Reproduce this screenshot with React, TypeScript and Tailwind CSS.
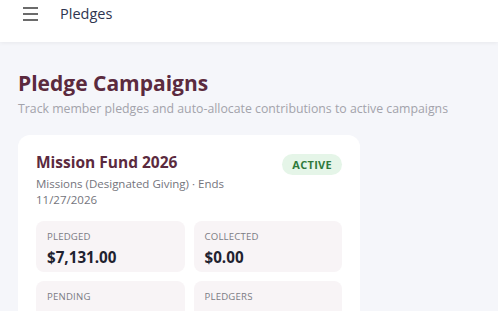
import React from "react";

function Stat({ label, value }: { label: string; value: string }) {
  return (
    <div className="rounded-[8px] bg-[#f8f4f6] px-[11px] pt-[10px] pb-[9px] h-[51px]">
      <div className="text-[9.6px] leading-[12px] uppercase tracking-[0.2px] text-[#7c7c84]">{label}</div>
      <div className="mt-[4px] text-[15.2px] leading-[20px] font-bold text-[#1f2230]">{value}</div>
    </div>
  );
}

export default function App() {
  return (
    <div
      className="w-[498px] h-[311px] overflow-hidden bg-[#f5f6fa]"
      style={{ fontFamily: '"Open Sans", "Noto Sans", sans-serif' }}
    >
      <header className="h-[42px] bg-white shadow-[0_1px_4px_rgba(0,0,0,0.06)] flex items-center relative z-10">
        <div className="ml-[23px] mt-[-14px] w-[15px] flex flex-col gap-[4px]">
          <span className="block h-[2px] bg-[#6b6b6b]" />
          <span className="block h-[2px] bg-[#6b6b6b]" />
          <span className="block h-[2px] bg-[#6b6b6b]" />
        </div>
        <span className="ml-[22px] mt-[-14px] text-[14.5px] text-[#2e3550]">Pledges</span>
      </header>
      <main className="px-[18px] pt-[26px]">
        <h1 className="text-[21px] leading-[30px] font-bold text-[#5b2a3e]">Pledge Campaigns</h1>
        <p className="mt-[3px] text-[12.3px] leading-[16px] text-[#a3a3ab]">
          Track member pledges and auto-allocate contributions to active campaigns
        </p>
        <div className="mt-[18px] w-[342px] rounded-[12px] bg-white px-[18px] pt-[16px] pb-[18px]">
          <div className="flex items-start justify-between">
            <div className="w-[200px]">
              <div className="text-[15.5px] leading-[22px] font-bold text-[#5b2a3e]">Mission Fund 2026</div>
              <div className="mt-[3px] text-[11.5px] leading-[16px] text-[#74747c]">
                Missions (Designated Giving) · Ends 11/27/2026
              </div>
            </div>
            <span className="mt-[3px] rounded-full bg-[#e5f5e8] px-[10px] py-[2.5px] text-[11px] leading-[16px] font-bold tracking-[0.3px] text-[#2f7a3b]">
              ACTIVE
            </span>
          </div>
          <div className="mt-[13px] grid grid-cols-2 gap-[9px]">
            <Stat label="Pledged" value="$7,131.00" />
            <Stat label="Collected" value="$0.00" />
            <Stat label="Pending" value="$7,131.00" />
            <Stat label="Pledgers" value="7" />
          </div>
        </div>
      </main>
    </div>
  );
}
